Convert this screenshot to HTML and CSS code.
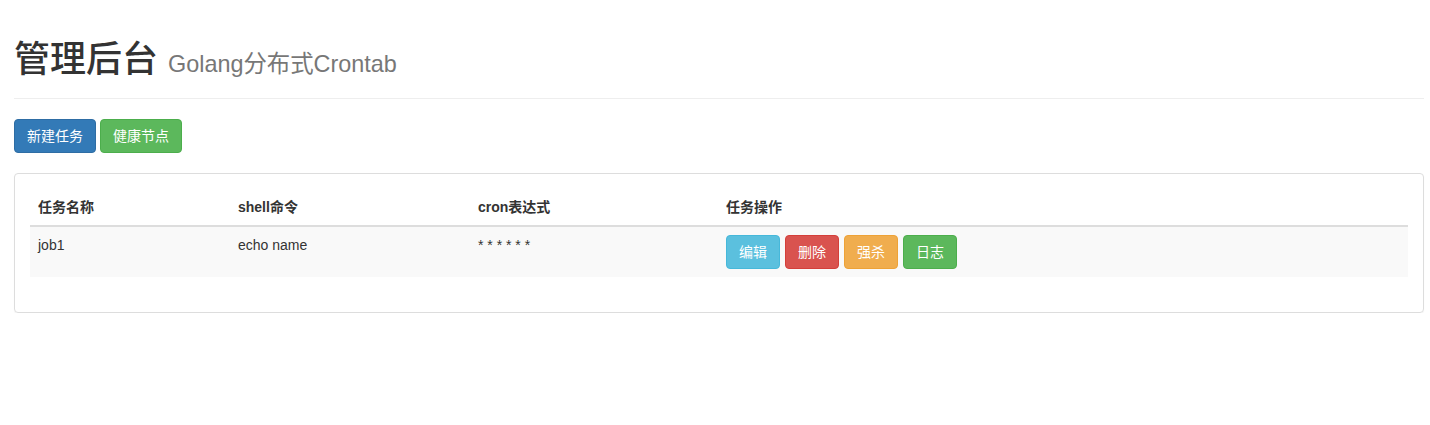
FILE: index.html
```html
<!DOCTYPE html>
<html lang="zh">
<head>
<meta charset="utf-8">
<title>管理后台</title>
<link rel="stylesheet" href="styles.css">
</head>
<body>
<div class="container">
  <div class="page-header">
    <h1>管理后台 <small>Golang分布式Crontab</small></h1>
  </div>
  <div class="toolbar">
    <button class="btn btn-primary">新建任务</button>
    <button class="btn btn-success">健康节点</button>
  </div>
  <div class="panel">
    <div class="panel-body">
      <table class="table">
        <thead>
          <tr>
            <th class="c1">任务名称</th>
            <th class="c2">shell命令</th>
            <th class="c3">cron表达式</th>
            <th>任务操作</th>
          </tr>
        </thead>
        <tbody>
          <tr class="striped">
            <td>job1</td>
            <td>echo name</td>
            <td>* * * * * *</td>
            <td>
              <div class="actions">
                <button class="btn btn-info">编辑</button>
                <button class="btn btn-danger">删除</button>
                <button class="btn btn-warning">强杀</button>
                <button class="btn btn-success">日志</button>
              </div>
            </td>
          </tr>
        </tbody>
      </table>
    </div>
  </div>
</div>
</body>
</html>
```

FILE: styles.css
```css
* { box-sizing: border-box; }
html, body { margin: 0; padding: 0; background: #fff; }
body {
  font-family: "Liberation Sans", Arial, "Noto Sans CJK SC", sans-serif;
  font-size: 14px;
  line-height: 1.42857143;
  color: #333;
}
.container {
  width: 1410px;
  margin-left: 14px;
}
.page-header {
  margin: 40px 0 20px;
  padding-bottom: 8px;
  border-bottom: 1px solid #eee;
}
h1 {
  margin: 20px 0 10px;
  font-size: 36px;
  font-weight: 500;
  line-height: 1.1;
  color: #333;
}
h1 small {
  font-size: 65%;
  font-weight: 400;
  color: #777;
  line-height: 1;
}
.toolbar {
  display: flex;
  gap: 4px;
  margin-bottom: 20px;
}
.btn {
  display: inline-block;
  padding: 6px 12px;
  font-family: inherit;
  font-size: 14px;
  line-height: 1.42857143;
  font-weight: 400;
  border: 1px solid transparent;
  border-radius: 4px;
  color: #fff;
  cursor: pointer;
  white-space: nowrap;
}
.btn-primary { background: #337ab7; border-color: #2e6da4; }
.btn-success { background: #5cb85c; border-color: #4cae4c; }
.btn-info { background: #5bc0de; border-color: #46b8da; }
.btn-danger { background: #d9534f; border-color: #d43f3a; }
.btn-warning { background: #f0ad4e; border-color: #eea236; }
.panel {
  border: 1px solid #ddd;
  border-radius: 4px;
  box-shadow: 0 1px 1px rgba(0,0,0,.05);
  width: 1410px;
}
.panel-body { padding: 15px; }
.table {
  width: 100%;
  border-collapse: collapse;
  border-spacing: 0;
  margin-bottom: 20px;
}
.table th, .table td {
  padding: 8px;
  line-height: 1.42857143;
  text-align: left;
  vertical-align: top;
}
.table th {
  font-weight: 700;
  border-bottom: 2px solid #ddd;
}
.table td { border-top: 0; }
.c1 { width: 200px; }
.c2 { width: 240px; }
.c3 { width: 248px; }
.striped td { background: #f9f9f9; }
.actions {
  display: flex;
  gap: 5px;
}
```
